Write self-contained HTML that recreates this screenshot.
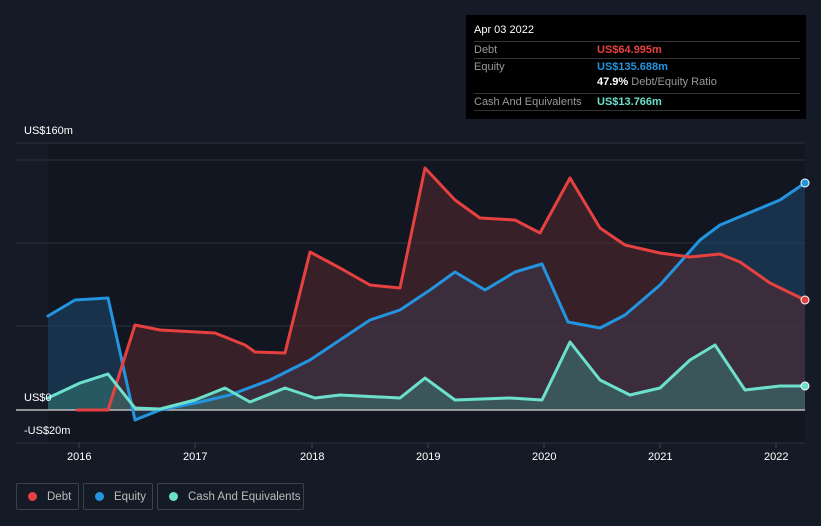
<!DOCTYPE html><html><head><style>
body{margin:0;background:#151b26;font-family:"Liberation Sans",sans-serif;}
.w{position:relative;width:821px;height:526px;overflow:hidden;background:#151b26}
.tt{position:absolute;left:466px;top:15px;width:340px;height:104px;background:#000;color:#fff;font-size:11px}
.tt .r{position:absolute;left:8px;right:6px;border-top:1px solid #333;height:17px;line-height:17px;color:#999}
.lg{position:absolute;top:483px;height:27px;border:1px solid #3a404c;border-radius:2px;color:#bbb;font-size:11.5px;line-height:27px;white-space:nowrap;box-sizing:border-box}
.lg i{display:inline-block;width:9px;height:9px;border-radius:50%;margin:0 10px 0 11px;vertical-align:-1px}
.ax{position:absolute;color:#fff;font-size:11px}
</style></head><body><div class="w">
<svg width="821" height="526" style="position:absolute;left:0;top:0">
<rect x="48" y="143" width="757" height="300" fill="#111620"/>
<g stroke="#2a303b" stroke-width="1">
<line x1="16" y1="143" x2="805" y2="143"/><line x1="16" y1="160" x2="805" y2="160"/><line x1="16" y1="243" x2="805" y2="243"/><line x1="16" y1="326" x2="805" y2="326"/><line x1="16" y1="443" x2="805" y2="443"/>
</g>
<g stroke="#3a404c"><line x1="79" y1="443" x2="79" y2="448"/><line x1="195" y1="443" x2="195" y2="448"/><line x1="312" y1="443" x2="312" y2="448"/><line x1="428" y1="443" x2="428" y2="448"/><line x1="544" y1="443" x2="544" y2="448"/><line x1="660" y1="443" x2="660" y2="448"/><line x1="776" y1="443" x2="776" y2="448"/></g>
<path d="M48,316 L75,300 L108,298 L135,420 L160,410 L200,402 L230,395 L270,380 L310,360 L340,340 L370,320 L400,310 L430,290 L455,272 L485,290 L515,272 L542,264 L568,322 L600,328 L625,315 L660,285 L700,240 L720,225 L780,200 L805,183 L805,410 L48,410Z" fill="#1d4a6e" opacity=".55"/>
<path d="M77,410 L108,410 L135,325 L160,330 L215,333 L245,345 L255,352 L285,353 L310,252 L340,268 L370,285 L400,288 L425,168 L455,200 L480,218 L515,220 L540,233 L570,178 L600,228 L625,245 L660,253 L690,257 L720,254 L740,262 L770,283 L805,300 L805,410Z" fill="#5a2a30" opacity=".55"/>
<path d="M48,398 L80,383 L108,374 L135,408 L160,409 L195,400 L225,388 L250,402 L285,388 L315,398 L340,395 L400,398 L425,378 L455,400 L510,398 L542,400 L570,342 L600,380 L630,395 L660,388 L690,360 L715,345 L745,390 L780,386 L805,386 L805,410 L48,410Z" fill="#3a8a80" opacity=".45"/>
<line x1="16" y1="410" x2="805" y2="410" stroke="#bbb" stroke-width="1.5"/>
<g fill="none" stroke-width="3" stroke-linejoin="round" stroke-linecap="round">
<path d="M48,316 L75,300 L108,298 L135,420 L160,410 L200,402 L230,395 L270,380 L310,360 L340,340 L370,320 L400,310 L430,290 L455,272 L485,290 L515,272 L542,264 L568,322 L600,328 L625,315 L660,285 L700,240 L720,225 L780,200 L805,183" stroke="#2394df"/>
<path d="M77,410 L108,410 L135,325 L160,330 L215,333 L245,345 L255,352 L285,353 L310,252 L340,268 L370,285 L400,288 L425,168 L455,200 L480,218 L515,220 L540,233 L570,178 L600,228 L625,245 L660,253 L690,257 L720,254 L740,262 L770,283 L805,300" stroke="#e64141"/>
<path d="M48,398 L80,383 L108,374 L135,408 L160,409 L195,400 L225,388 L250,402 L285,388 L315,398 L340,395 L400,398 L425,378 L455,400 L510,398 L542,400 L570,342 L600,380 L630,395 L660,388 L690,360 L715,345 L745,390 L780,386 L805,386" stroke="#6ce0cc"/>
</g>
<circle cx="805" cy="183" r="4" fill="#2394df" stroke="#fff"/><circle cx="805" cy="300" r="4" fill="#e64141" stroke="#fff"/><circle cx="805" cy="386" r="4" fill="#6ce0cc" stroke="#fff"/>
</svg>
<div class="ax" style="left:24px;top:125px">US$160m</div>
<div class="ax" style="left:24px;top:392px">US$0</div>
<div class="ax" style="left:24px;top:425px">-US$20m</div>
<div class="ax" style="left:67px;top:451px">2016</div><div class="ax" style="left:183px;top:451px">2017</div><div class="ax" style="left:300px;top:451px">2018</div><div class="ax" style="left:416px;top:451px">2019</div><div class="ax" style="left:532px;top:451px">2020</div><div class="ax" style="left:648px;top:451px">2021</div><div class="ax" style="left:764px;top:451px">2022</div>
<div class="tt">
<div style="position:absolute;left:8px;top:9px">Apr 03 2022</div>
<div class="r" style="top:26px">Debt<span style="position:absolute;left:123px;color:#e64141;font-weight:bold">US$64.995m</span></div>
<div class="r" style="top:43px">Equity<span style="position:absolute;left:123px;color:#2394df;font-weight:bold">US$135.688m</span></div>
<div style="position:absolute;left:131px;top:61px;color:#999"><b style="color:#fff">47.9%</b> Debt/Equity Ratio</div>
<div class="r" style="top:78px;height:16px;border-bottom:1px solid #333">Cash And Equivalents<span style="position:absolute;left:123px;color:#6ce0cc;font-weight:bold">US$13.766m</span></div>
</div>
<div class="lg" style="left:16px;width:63px"><i style="background:#e64141"></i>Debt</div>
<div class="lg" style="left:83px;width:70px"><i style="background:#2394df"></i>Equity</div>
<div class="lg" style="left:157px;width:147px"><i style="background:#6ce0cc"></i>Cash And Equivalents</div>
</div></body></html>
